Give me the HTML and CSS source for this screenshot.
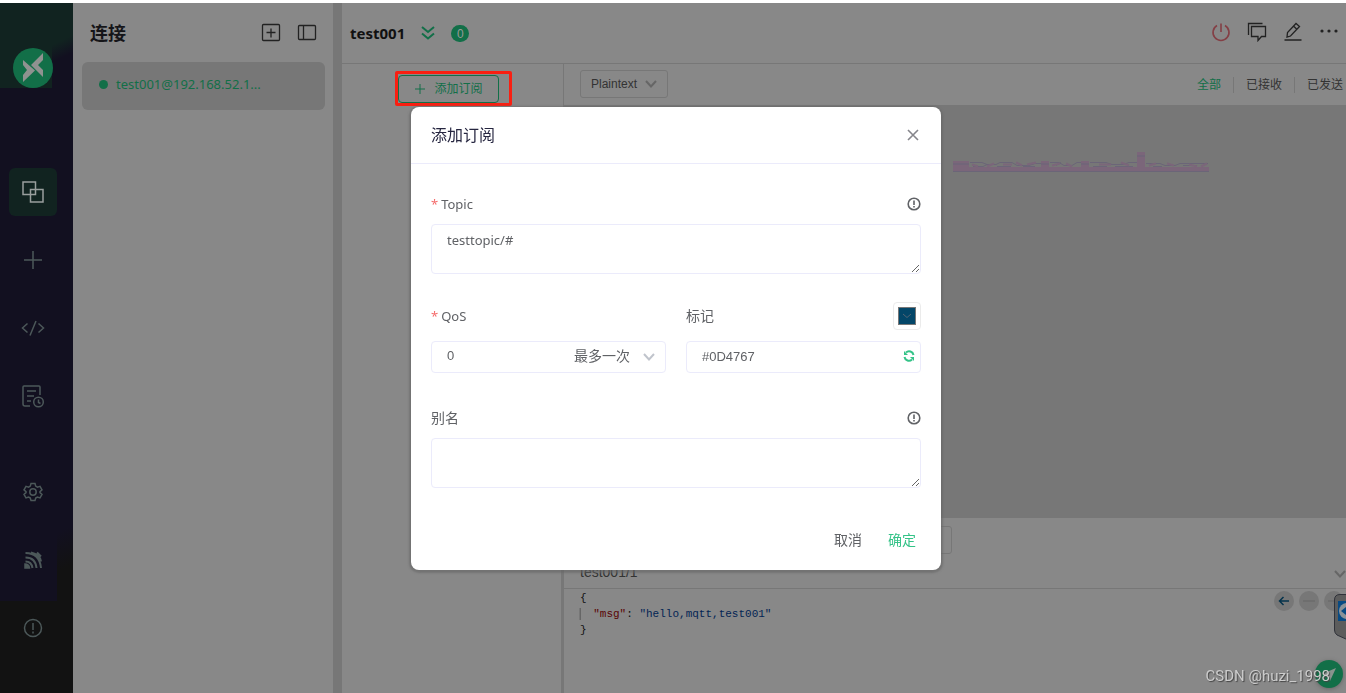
FILE: index.html
```html
<!DOCTYPE html>
<html lang="zh-CN">
<head>
<meta charset="utf-8">
<title>连接 - test001</title>
<link rel="stylesheet" href="styles.css">
</head>
<body>
<div class="app">
  <nav class="sidebar" aria-label="导航">
    <a class="logo" href="#" aria-label="首页">
      <svg viewBox="0 0 40 40" width="40" height="40"><circle cx="20" cy="20" r="20" fill="#126f48"/><path d="M10 12l12 10.500L10 34v-7l4-5-4-5zM30 5v7l-5 5 5 5v7L18 17z" fill="#8f9290"/></svg>
    </a>
    <div class="nav-group">
      <a class="nav-item active" href="#" aria-label="连接"><svg viewBox="0 0 24 24" width="24" height="24"><path d="M2 2h12.500v12.500H2zM9.500 9.500H22V22H9.500z"/></svg></a>
      <a class="nav-item" href="#" aria-label="新建"><svg viewBox="0 0 24 24" width="24" height="24"><path d="M12 3v18M3 12h18"/></svg></a>
      <a class="nav-item" href="#" aria-label="脚本"><svg viewBox="0 0 24 24" width="24" height="24"><path d="M6.500 7.500l-5 4.500 5 4.500M17.500 7.500l5 4.500-5 4.500M15 5L9 19.500"/></svg></a>
      <a class="nav-item" href="#" aria-label="日志"><svg viewBox="0 0 24 24" width="24" height="24"><path d="M9 22H4q-2 0-2-2V3q0-1 1-1h15q1 0 1 1v8M6 7h9M6 12h7M6 17h4M17.500 15.500v3l2 1"/><circle cx="17.500" cy="18" r="4.800"/></svg></a>
    </div>
    <div class="nav-group bottom">
      <a class="nav-item" href="#" aria-label="设置"><svg viewBox="0 0 24 24" width="24" height="24"><path d="M10 3.500h4l.7 2.600 1.700 1 2.600-.8 2 3.500-2 1.800v1l2 1.800-2 3.500-2.600-.8-1.700 1-.7 2.500h-4l-.7-2.500-1.700-1-2.600.8-2-3.500 2-1.800v-1l-2-1.800 2-3.500 2.600.8 1.700-1z"/><circle cx="12" cy="12" r="3.200"/></svg></a>
      <a class="nav-item" href="#" aria-label="订阅源"><svg viewBox="0 0 24 24" width="24" height="24"><path class="feed" d="M4.500 5q14 0 15.500 15M4.500 9.500q10 0 11 10.500M4.500 13.500q6 0 7 6.500M10 4.500q9 2 10 9M16 4.500l4 4"/><path class="feed-dot" d="M4 16q4 0 4.500 4H4z"/></svg></a>
      <a class="nav-item" href="#" aria-label="关于"><svg viewBox="0 0 24 24" width="24" height="24"><circle cx="12" cy="12" r="8.500"/><path d="M12 7v7M12 15.500v2"/></svg></a>
    </div>
  </nav>

  <aside class="connections">
    <header class="connections-head">
      <h1>连接</h1>
      <button type="button" aria-label="新建连接"><svg viewBox="0 0 20 20" width="20" height="20"><rect x="1.500" y="1.500" width="17" height="16" rx="1"/><path d="M10 5.500v9M5.500 9.500h9"/></svg></button>
      <button type="button" aria-label="隐藏列表"><svg viewBox="0 0 20 20" width="20" height="20"><rect x="1.500" y="2.500" width="17" height="14" rx="1"/><path d="M6.500 3v14"/></svg></button>
    </header>
    <a class="connection" href="#"><span class="dot"></span><span class="connection-name">test001@192.168.52.1...</span></a>
  </aside>

  <div class="splitter"></div>

  <main class="main">
    <header class="main-head">
      <h2>test001</h2>
      <button type="button" class="green-icon" aria-label="展开"><svg viewBox="0 0 16 16" width="16" height="16"><path d="M2 2l6 5 6-5M2 8.500l6 5 6-5"/></svg></button>
      <span class="badge">0</span>
      <div class="head-tools">
        <button type="button" class="power" aria-label="断开"><svg viewBox="0 0 20 20" width="20" height="20"><path d="M10 1.500v8.500M6 3.500a8 8 0 1 0 8 0"/></svg></button>
        <button type="button" aria-label="新窗口"><svg viewBox="0 0 20 20" width="20" height="20"><path d="M1.500 13V1.500H15.500M4.500 4.500h14v10h-4l-3.500 4v-4H4.500z"/></svg></button>
        <button type="button" aria-label="编辑"><svg viewBox="0 0 20 20" width="20" height="20"><path d="M1.500 18h17M4 15l.5-4.500 8.500-9 3.500 3-9 9.500zM10.500 4l3.500 3.500"/></svg></button>
        <button type="button" aria-label="更多"><svg viewBox="0 0 20 20" width="20" height="20"><g class="solid"><circle cx="3" cy="9" r="1.600"/><circle cx="10" cy="9" r="1.600"/><circle cx="17" cy="9" r="1.600"/></g></svg></button>
      </div>
    </header>

    <div class="workspace">
      <section class="subscriptions">
        <div class="highlight">
          <button type="button" class="add-sub"><svg viewBox="0 0 12 12" width="12" height="12"><path d="M6 1v10M1 6h10"/></svg>添加订阅</button>
        </div>
      </section>

      <section class="messages">
        <div class="filter-bar">
          <button type="button" class="format">Plaintext<svg viewBox="0 0 12 12" width="12" height="12"><path d="M1 3l5 5.500L11 3"/></svg></button>
          <div class="filters">
            <a class="current" href="#">全部</a>
            <a href="#">已接收</a>
            <a href="#">已发送</a>
          </div>
        </div>
        <div class="message-list">
          <svg class="masked" viewBox="0 0 256 20" width="256" height="20" aria-hidden="true">
            <path d="M0 9h16v7H0zM88 9h8v7h-8zM128 9h8v7h-8zM0 15h256v5H0zM184 0h8v16h-8z" fill="#7b667a"/>
            <path d="M0 12h16M88 12h8M128 12h8M184 4h8M0 19.500h256" stroke="#6b6578" fill="none"/>
            <path d="M17 10.500h12l5 2h9l4-2h12l5 3h12l6-2h6M97 10.500h9l5 3h8l5-3h4M137 10.500h16l6 2h11l6-2h8M193 11.500h14l5 2h10l5-2h28M20 14.500h10l4-2M44 14.500h14M70 14.500h12M103 13.500l5-3M140 14.500h14M162 14.500h18M200 14.500h9M230 13.500h14" stroke="#6b6578" fill="none"/>
            <path d="M19 12.500l6 2M34 14.500l7-3M50 12.500h9M63 10.500l6 3M74 12.500l9-2M99 13.500l8-2M113 11.500l6 3M146 12.500h12M168 10.500l8 3M196 13.500l7-2M214 11.500l7 2M236 12.500l8 2M248 14.500l6-3" stroke="#7b667a" stroke-width="2" fill="none"/>
          </svg>
        </div>
        <div class="composer">
          <div class="composer-options"><span class="option-box"></span></div>
          <div class="topic-row"><input type="text" value="test001/1" aria-label="主题"><svg viewBox="0 0 12 12" width="12" height="12"><path d="M1 3l5 5.500L11 3"/></svg></div>
          <div class="editor">
            <pre>{
<span class="guide">  <span class="key">"msg"</span>: <span class="string">"hello,mqtt,test001"</span></span>
}</pre>
            <div class="history">
              <button type="button" class="previous" aria-label="上一条"><svg viewBox="0 0 12 12" width="12" height="12"><path d="M11 6H2M5.500 2L1.500 6l4 4"/></svg></button>
              <button type="button" aria-label="清除"><svg viewBox="0 0 12 12" width="12" height="12"><path d="M0 6h12"/></svg></button>
              <button type="button" aria-label="下一条"><svg viewBox="0 0 12 12" width="12" height="12"><path d="M0 6h11M7 2l4 4-4 4"/></svg></button>
            </div>
          </div>
        </div>
      </section>
    </div>
  </main>
</div>

<button type="button" class="send" aria-label="发送"><svg viewBox="0 0 28 28" width="28" height="28"><path d="M21 8L7 14l5 2 3 5z" fill="#89938e"/></svg></button>
<div class="side-tab" aria-hidden="true"><svg viewBox="0 0 12 46" width="12" height="46"><path d="M.5 6q0-5.500 5.500-5.500h7v45L3 41q-2.500-2-2.500-5z" fill="#5c5c5c" stroke="#30323a"/><path d="M4 7h8v20H4z" fill="#084a83"/><circle cx="13" cy="17" r="8" fill="#8b9298"/><path d="M7 17l5-4v3h2v2h-2v3z" fill="#084a83"/></svg></div>

<div class="overlay">
  <form class="dialog" role="dialog" aria-labelledby="dialog-title">
    <header class="dialog-head">
      <h2 id="dialog-title">添加订阅</h2>
      <button type="button" class="close" aria-label="关闭"><svg viewBox="0 0 14 14" width="14" height="14"><path d="M2 2l10 10M12 2L2 12"/></svg></button>
    </header>
    <div class="dialog-body">
      <div class="field">
        <div class="label-row"><label class="required latin" for="topic">Topic</label><svg class="info" viewBox="0 0 14 14" width="14" height="14"><circle cx="7" cy="7" r="5.800"/><path d="M7 3.500v4.500M7 9v1.500"/></svg></div>
        <textarea id="topic">testtopic/#</textarea>
      </div>
      <div class="pair">
        <div class="field">
          <div class="label-row"><label class="required latin" for="qos">QoS</label></div>
          <div class="control">
            <select id="qos"><option>0</option></select>
            <span class="control-end"><span>最多一次</span><svg viewBox="0 0 12 12" width="12" height="12"><path d="M1 4l5 5.500L11 4"/></svg></span>
          </div>
        </div>
        <div class="field">
          <div class="label-row"><label for="color">标记</label><button type="button" class="swatch" aria-label="选择颜色"><svg viewBox="0 0 18 18" width="18" height="18"><rect x=".5" y=".5" width="17" height="17" fill="#034668" stroke="#777"/><path d="M5 7l4 3.500L13 7" fill="none" stroke="#526474"/></svg></button></div>
          <div class="control">
            <input id="color" type="text" value="#0D4767">
            <button type="button" class="refresh" aria-label="随机颜色"><svg viewBox="0 0 12 12" width="12" height="12"><path d="M10.500 5A4.500 4.500 0 0 0 3 2.500M1.500 7A4.500 4.500 0 0 0 9 9.500"/><path class="arrow" d="M1 1v4h4zM11 11V7H7z"/></svg></button>
          </div>
        </div>
      </div>
      <div class="field">
        <div class="label-row"><label for="alias">别名</label><svg class="info" viewBox="0 0 14 14" width="14" height="14"><circle cx="7" cy="7" r="5.800"/><path d="M7 3.500v4.500M7 9v1.500"/></svg></div>
        <textarea id="alias"></textarea>
      </div>
    </div>
    <footer class="dialog-foot">
      <button type="button">取消</button>
      <button type="submit" class="confirm">确定</button>
    </footer>
  </form>
</div>
<div class="watermark">CSDN @huzi_1998</div>
</body>
</html>
```
FILE: styles.css
```css
* { box-sizing: border-box; }

body {
  margin: 0;
  background: #fff;
  color: #222;
  font: 14px/20px "Noto Sans", "Noto Sans CJK SC", sans-serif;
  overflow: hidden;
}

h1, h2, pre { margin: 0; }
a { color: inherit; text-decoration: none; }
button { padding: 0; border: 0; background: none; color: inherit; font: inherit; }
svg { display: block; fill: none; stroke: currentColor; flex: none; }
input, select, textarea { font: inherit; color: inherit; outline: 0; }

.app {
  display: flex;
  height: 100vh;
  padding-top: 3px;
}

/* Sidebar */
.sidebar {
  display: flex;
  flex-direction: column;
  flex: none;
  width: 73px;
  padding: 45px 16px 41px 9px;
  background:
    linear-gradient(#112320, #112320) 0 0 / 52px 85px no-repeat,
    linear-gradient(155deg, #112320 60%, #121020 85%) 52px 0 / 21px 60px no-repeat,
    linear-gradient(#121212, #121212) 0 100% / 100% 92px no-repeat,
    linear-gradient(155deg, #121020 15%, #121212 35%) 100% 100% / 16px 190px no-repeat,
    #121020;
  color: #4c5859;
}
.logo { align-self: center; }
.logo svg { stroke: none; }
.nav-group { display: flex; flex-direction: column; gap: 20px; margin-top: 80px; }
.nav-group.bottom { margin-top: auto; }
.nav-item {
  display: flex;
  align-items: center;
  justify-content: center;
  height: 48px;
  border-radius: 6px;
}
.nav-item svg { stroke-width: 1.5; }
.nav-item.active { background: #112320; color: #999e9d; }
.nav-item .feed { stroke-width: 2; }
.feed-dot { fill: currentColor; }

/* Connections */
.connections {
  flex: none;
  width: 260px;
  padding: 0 8px 0 9px;
  background: #888;
}
.connections-head {
  display: flex;
  align-items: center;
  gap: 16px;
  height: 59px;
  padding: 0 8px;
}
.connections-head h1 { margin-right: auto; color: #151518; font-size: 18px; line-height: 24px; }
.connections-head svg { stroke-width: 1.3; }
.connection {
  display: flex;
  align-items: center;
  gap: 8px;
  height: 48px;
  padding: 0 17px 4px;
  border-radius: 6px;
  background: #777;
  color: #126f48;
  font-size: 13px;
}
.dot { width: 9px; height: 9px; border-radius: 50%; background: currentColor; }
.splitter { flex: none; width: 9px; background: #777; }

/* Main area */
.main {
  display: flex;
  flex-direction: column;
  flex: 1;
  min-width: 0;
  background: #888;
}
.main-head {
  display: flex;
  align-items: center;
  gap: 15px;
  height: 61px;
  padding: 0 6px 0 8px;
  border-bottom: 1px solid #777;
}
.main-head h2 { color: #111; font-size: 15px; }
.green-icon { color: #126f48; }
.green-icon svg { stroke-width: 2; }
.badge {
  width: 18px;
  height: 17px;
  border-radius: 9px;
  background: #126f48;
  color: #999;
  font: 12px/18px "Liberation Sans", sans-serif;
  text-align: center;
}
.head-tools { display: flex; gap: 16px; margin-left: auto; padding: 0 1px 2px 0; }
.head-tools svg { stroke-width: 1.3; }
.head-tools .power { color: #843f45; }
.head-tools .power svg { stroke-width: 1.6; }
.solid { fill: currentColor; stroke: none; }

.workspace { display: flex; flex: 1; min-height: 0; }
.subscriptions {
  display: flex;
  align-items: flex-start;
  flex: none;
  width: 221px;
  padding: 7px 0 0 53px;
}
.highlight { padding: 1px 10px 0 0; border: 3px solid #f91f12; border-radius: 2px; }
.add-sub {
  display: flex;
  align-items: center;
  justify-content: center;
  gap: 8px;
  width: 101px;
  height: 28px;
  border: 1px solid #126f48;
  border-radius: 4px;
  color: #126f48;
  font-size: 12px;
}
.messages { display: flex; flex-direction: column; flex: 1; min-width: 0; }
.filter-bar {
  display: flex;
  align-items: center;
  justify-content: space-between;
  height: 41px;
  padding: 0 3px 2px 16px;
  border-left: 1px solid #777;
}
.format {
  display: flex;
  align-items: center;
  gap: 8px;
  height: 28px;
  padding: 0 10px;
  border: 1px solid #777;
  border-radius: 3px;
  color: #333;
  font: 12px/16px "Liberation Sans", sans-serif;
}
.format svg, .topic-row svg { color: #666; stroke-width: 2; }
.filters { display: flex; padding-top: 3px; color: #333; font-size: 12px; line-height: 16px; }
.filters a + a { margin-left: 12px; padding-left: 12px; border-left: 1px solid #777; }
.filters .current { color: #126f48; }
.message-list {
  display: flex;
  align-items: flex-start;
  justify-content: flex-end;
  flex: 1;
  padding: 47px 137px 0 0;
  background: #777;
}
.masked { stroke: none; }

/* Composer */
.composer {
  display: flex;
  flex-direction: column;
  height: 175px;
  margin-left: -2px;
  border-left: 3px solid #777;
}
.composer-options { height: 42px; padding: 8px 16px; }
.option-box { display: block; width: 372px; height: 28px; border: 1px solid #777; border-radius: 3px; }
.topic-row {
  display: flex;
  align-items: center;
  height: 29px;
  padding: 0 0 4px 16px;
  border-bottom: 1px solid #777;
}
.topic-row input {
  flex: 1;
  min-width: 0;
  padding: 0;
  border: 0;
  background: none;
  color: #333;
  font: 14px/20px "Liberation Sans", sans-serif;
}
.topic-row svg { margin-top: 4px; }
.editor { position: relative; flex: 1; padding: 1px 16px; }
.editor pre { color: #111; font: 11px/16px "Liberation Mono", monospace; }
.guide { box-shadow: -1px 0 #777, inset 1px 0 #666; }
.key { color: #580404; }
.string { color: #032454; }
.history { position: absolute; top: 2px; right: 2px; display: flex; gap: 5px; }
.history button {
  display: flex;
  align-items: center;
  justify-content: center;
  width: 20px;
  height: 20px;
  border-radius: 50%;
  background: #777;
  color: #666;
}
.history .previous { color: #04334c; }
.previous svg { stroke-width: 1.5; }

/* Floating items */
.send {
  position: fixed;
  right: 3px;
  bottom: 5px;
  border-radius: 50%;
  background: #126f48;
  box-shadow: 0 1px 4px #666;
}
.send svg, .side-tab svg { stroke: none; }
.side-tab { position: fixed; right: 0; bottom: 53px; }
.watermark {
  position: fixed;
  right: 16px;
  bottom: 7px;
  color: #ccc;
  font: 15px/20px Roboto, "Liberation Sans", sans-serif;
  text-shadow: 1px 1px 1px #444;
}

/* Dialog */
.overlay {
  position: fixed;
  inset: 0;
  display: flex;
  align-items: flex-start;
  justify-content: center;
  padding: 107px 0 0 6px;
  pointer-events: none;
}
.dialog {
  width: 530px;
  border-radius: 8px;
  background: #fff;
  box-shadow: 0 1px 2px 2px #6669;
  color: #606266;
  pointer-events: auto;
}
.dialog-head {
  display: flex;
  align-items: center;
  justify-content: space-between;
  height: 57px;
  padding: 0 21px 0 20px;
  border-bottom: 1px solid #ebebfb;
}
.dialog-head h2 { color: #262640; font-size: 16px; font-weight: 400; line-height: 24px; }
.close { color: #85858b; }
.close svg { stroke-width: 1.6; }
.dialog-body { display: flex; flex-direction: column; gap: 28px; padding: 26px 20px 0; }
.label-row {
  display: flex;
  align-items: center;
  justify-content: space-between;
  height: 28px;
}
.dialog-body > .field .label-row { margin-bottom: 6px; }
.pair .label-row { margin-bottom: 11px; }
.latin { font-size: 13px; }
.required::before { content: "*"; margin-right: 3px; color: #f56c6c; }
.info { color: #606266; stroke-width: 1.6; }
textarea {
  display: block;
  width: 100%;
  height: 50px;
  padding: 5px 15px;
  border: 1px solid #ebebfb;
  border-radius: 4px;
  background: #fff;
  font-size: 13px;
  resize: vertical;
}
.pair { display: grid; grid-template-columns: 1fr 1fr; gap: 20px; margin-bottom: 3px; }
.control { position: relative; }
.control input, .control select {
  display: block;
  width: 100%;
  height: 32px;
  padding: 0 15px 2px;
  border: 1px solid #ebebfb;
  border-radius: 4px;
  background: #fff;
  appearance: none;
  font: 13px/20px "Liberation Sans", sans-serif;
}
.control-end {
  position: absolute;
  top: 5px;
  right: 11px;
  display: flex;
  align-items: center;
  gap: 13px;
  pointer-events: none;
}
.control-end svg { color: #c0c4cc; stroke-width: 2; }
.swatch { padding: 4px; border: 1px solid #ebebeb; border-radius: 4px; }
.refresh { position: absolute; top: 9px; right: 6px; color: #34c388; }
.refresh svg { stroke-width: 2; }
.arrow { fill: currentColor; stroke: none; }
.dialog-foot { display: flex; justify-content: flex-end; gap: 26px; padding: 42px 25px 20px; }
.confirm { color: #34c388; }
```
